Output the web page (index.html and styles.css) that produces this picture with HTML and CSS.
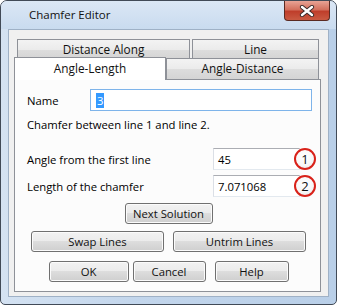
FILE: index.html
```html
<!DOCTYPE html>
<html lang="en">
<head>
  <meta charset="UTF-8" />
  <title>Chamfer Editor</title>
  <link rel="stylesheet" href="styles.css">
</head>
<body>
  <div class="window">
    <div class="titlebar">
      <span class="title">Chamfer Editor</span>
      <div class="close">
        <svg width="16" height="12" viewBox="0 0 16 12">
          <path d="M3 2 L13 10 M13 2 L3 10" stroke="#3b2a2a" stroke-width="4.2" stroke-linecap="round" />
          <path d="M3 2 L13 10 M13 2 L3 10" stroke="#ffffff" stroke-width="2.4" stroke-linecap="round" />
        </svg>
      </div>
    </div>

    <div class="client">
      <div class="tab-row back">
        <div class="tab along">Distance Along</div>
        <div class="tab line">Line</div>
      </div>
      <div class="tab-row front">
        <div class="tab active">Angle-Length</div>
        <div class="tab">Angle-Distance</div>
      </div>

      <div class="panel">
        <div class="name-row">
          <span class="label short">Name</span>
          <div class="input focus"><span class="sel">3</span></div>
        </div>
        <p class="info">Chamfer between line 1 and line 2.</p>

        <div class="field first">
          <span class="label">Angle from the first line</span>
          <div class="input num">45</div>
          <span class="badge">1</span>
        </div>
        <div class="field">
          <span class="label">Length of the chamfer</span>
          <div class="input num">7.071068</div>
          <span class="badge">2</span>
        </div>

        <div class="buttons solo">
          <button class="btn next">Next Solution</button>
        </div>
        <div class="buttons pair">
          <button class="btn wide">Swap Lines</button>
          <button class="btn wide">Untrim Lines</button>
        </div>
        <div class="buttons footer">
          <button class="btn ok">OK</button>
          <button class="btn cancel">Cancel</button>
          <button class="btn help">Help</button>
        </div>
      </div>
    </div>
  </div>
</body>
</html>
```

FILE: styles.css
```css
body {
  margin: 0;
  background: #fff;
  font-family: "Open Sans", "Noto Sans", sans-serif;
  font-size: 11px;
  color: #000;
}
.window {
  width: 337px;
  height: 305px;
  box-sizing: border-box;
  border: 1px solid #414a57;
  border-radius: 7px 7px 5px 5px;
  background: linear-gradient(90deg, #d4e2f2 0%, #c3d6ec 40%, #b9cfe8 100%);
  display: flex;
  flex-direction: column;
  overflow: hidden;
}
.titlebar {
  height: 28px;
  display: flex;
  align-items: flex-start;
  background: linear-gradient(180deg, #dbe7f5 0%, #c9dbef 100%);
}
.title {
  margin: 6px 0 0 28px;
  font-size: 11.5px;
  color: #111;
  flex: 1;
}
.close {
  width: 44px;
  height: 19px;
  margin-right: 6px;
  border: 1px solid #5a2a22;
  border-top: none;
  border-radius: 0 0 4px 4px;
  background: linear-gradient(180deg, #e8a395 0%, #d3705e 45%, #bf3e2b 55%, #c95a42 100%);
  display: flex;
  align-items: center;
  justify-content: center;
}
.client {
  flex: 1;
  margin: 0 7px 7px 7px;
  border: 1px solid #9fb1c6;
  background: #f0f0f0;
  padding: 9px 7px 4px 5px;
  display: flex;
  flex-direction: column;
}
.tab-row {
  display: flex;
}
.tab-row.back {
  margin-left: 3px;
  gap: 2px;
  height: 20px;
}
.tab-row.front {
  height: 22px;
  margin-top: -2px;
  align-items: flex-end;
  position: relative;
}
.tab {
  box-sizing: border-box;
  border: 1px solid #8e9198;
  border-bottom: none;
  background: linear-gradient(180deg, #f3f3f3 0%, #ebebeb 50%, #dddddd 51%, #d4d4d4 100%);
  text-align: center;
  font-size: 11.8px;
  line-height: 18px;
  color: #111;
}
.tab.along { width: 173px; }
.tab.line { width: 127px; }
.tab-row.front .tab {
  width: 153px;
  height: 21px;
}
.tab-row.front .tab.active {
  width: 152px;
  height: 23px;
  margin-bottom: -1px;
  background: #fff;
  line-height: 20px;
  position: relative;
  z-index: 1;
}
.panel {
  flex: 1;
  border: 1px solid #8e9198;
  background: #fcfcfc;
  padding: 9px 0 0 12px;
  display: flex;
  flex-direction: column;
}
.name-row, .field {
  display: flex;
  align-items: center;
  height: 22px;
}
.name-row {
  margin-right: 8px;
}
.label {
  width: 186px;
  flex-shrink: 0;
  font-size: 11.3px;
}
.label.short {
  width: 63px;
}
.input {
  box-sizing: border-box;
  height: 22px;
  flex-shrink: 0;
  background: #fff;
  border: 1px solid #abadb3;
  border-color: #abadb3 #e2e3ea #e3e9ef #dbdfe6;
  padding: 3px 6px;
  font-size: 11.3px;
  line-height: 15px;
}
.input.focus {
  flex: 1;
  border: 1px solid #7eb4ea;
  padding-left: 5px;
}
.sel {
  background: #3399ff;
  color: #fff;
  padding: 0 1px;
}
.input.num {
  width: 87px;
  padding-left: 4px;
}
.info {
  margin: 6px 0 0 0;
  line-height: 16px;
  font-size: 11.3px;
}
.field.first {
  margin-top: 15px;
}
.field {
  margin-top: 5px;
}
.badge {
  box-sizing: border-box;
  flex-shrink: 0;
  width: 22px;
  height: 22px;
  margin-left: -6px;
  border: 2px solid #d9221a;
  border-radius: 50%;
  background: radial-gradient(circle at 45% 35%, #ffffff 0%, #f7f7f7 60%, #dedede 100%);
  text-align: center;
  font-size: 13px;
  line-height: 18px;
  color: #111;
  position: relative;
}
.buttons {
  display: flex;
  justify-content: center;
  margin-left: -10px;
}
.buttons.solo { margin-top: 6px; }
.buttons.pair { margin-top: 7px; gap: 9px; }
.buttons.footer { margin-top: 9px; }
.btn {
  box-sizing: border-box;
  height: 21px;
  padding: 0;
  border: 1px solid #707070;
  border-radius: 3px;
  background: linear-gradient(180deg, #f2f2f2 0%, #ebebeb 49%, #dddddd 50%, #cfcfcf 100%);
  box-shadow: inset 0 0 0 1px #fbfbfb;
  font-family: "Open Sans", "Noto Sans", sans-serif;
  font-size: 11.3px;
  color: #111;
}
.btn.next { width: 88px; }
.btn.wide { width: 133px; }
.btn.ok { width: 80px; margin-right: 4px; }
.btn.cancel { width: 73px; margin-right: 9px; }
.btn.help { width: 74px; }
```
